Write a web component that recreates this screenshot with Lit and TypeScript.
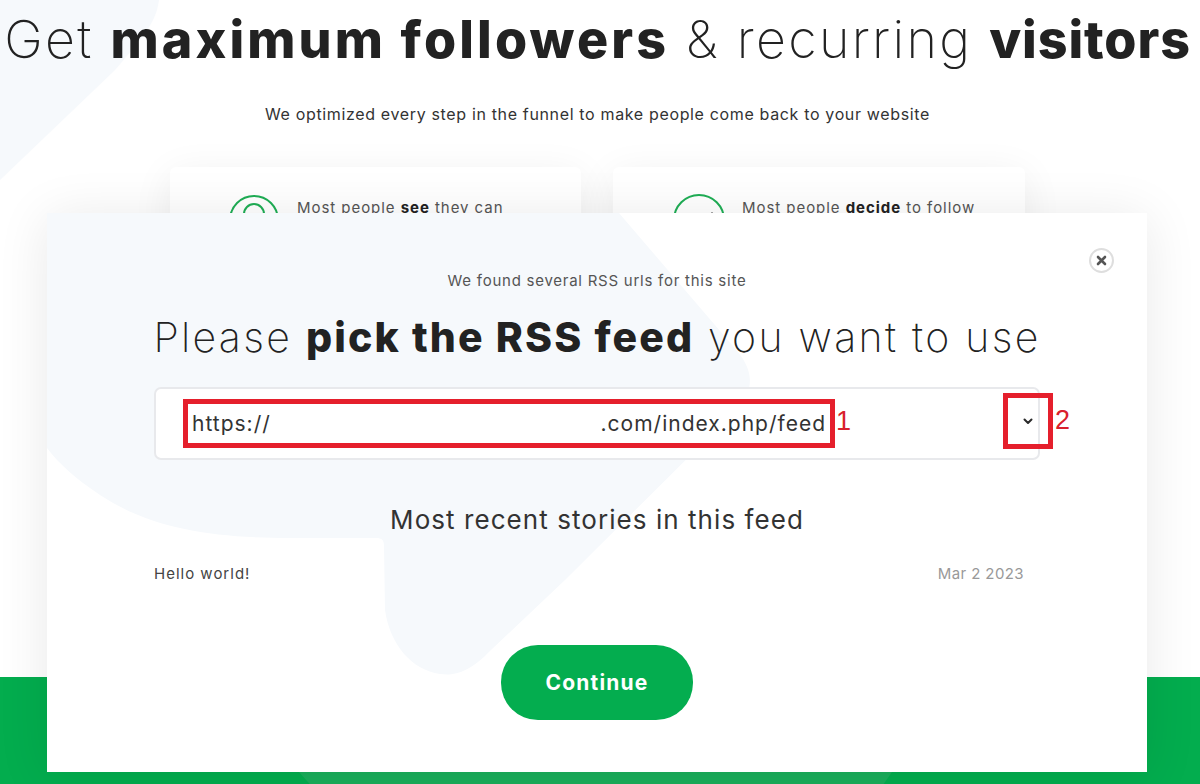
import { LitElement, html, css } from "lit";
import { customElement } from "lit/decorators.js";

@customElement("app-root")
export class AppRoot extends LitElement {
  static styles = css`
    :host { display: block; width: 1200px; height: 784px; font-family: Inter, "Noto Sans", sans-serif; color: #222; }
    * { box-sizing: border-box; }
    .page { position: relative; width: 1200px; height: 784px; overflow: hidden; background: #fff; display: flex; flex-direction: column; }
    .bg { position: absolute; left: 0; top: 0; pointer-events: none; }
    .main { position: relative; flex: 1; min-height: 0; padding-right: 5px; overflow: hidden; display: flex; flex-direction: column; align-items: center; }
    .main > h1, .main > .lead, .main > .cards { position: relative; }
    h1 { margin: 8px 0 0; font-size: 52px; line-height: 64px; font-weight: 200; white-space: nowrap; letter-spacing: 2.3px; color: #222; }
    h1 b, h2 b { font-weight: 800; color: #222; }
    h1 b.long { letter-spacing: 3.1px; }
    h1 b.short { letter-spacing: 0.9px; }
    .lead { margin: 31px 0 0; font-size: 16px; line-height: 22px; letter-spacing: 0.65px; color: #333; }
    .cards { display: grid; grid-template-columns: 411px 412px; gap: 32px; margin-top: 42px; }
    .card { height: 200px; background: #fff; border-radius: 6px; box-shadow: 0 8px 40px rgba(0,0,0,.07); padding: 27px 0 0 60px; display: flex; gap: 17px; }
    .card svg { flex: none; }
    .card p { margin: 4px 0 0; font-size: 15px; line-height: 20px; letter-spacing: 0.95px; color: #555; white-space: nowrap; }
    .card p b { color: #222; font-weight: 700; }
    .band { height: 107px; flex: none; background: #03ad4e; position: relative; }
    .strip { position: absolute; left: 299px; bottom: 0; width: 593px; height: 12px; background: #1aae5b; clip-path: polygon(0 0, 100% 0, 98.6% 100%, 1.8% 100%); }
    .modal { position: absolute; left: 47px; top: 213px; width: 1100px; height: 559px; background: #fff; box-shadow: 0 4px 50px rgba(0,0,0,.09); display: flex; flex-direction: column; align-items: center; padding: 57px 107px 0; overflow: visible; }
    .modal > * { position: relative; }
    .modal > svg.shape { position: absolute; left: 0; top: 0; }
    .close { position: absolute; left: 1042px; top: 35px; width: 25px; height: 25px; border-radius: 50%; border: 2px solid #dedede; background: #fff; display: flex; align-items: center; justify-content: center; }
    .found { margin: 0; font-size: 15px; line-height: 22px; letter-spacing: 0.75px; color: #555; }
    h2 { margin: 21px 0 0; font-size: 41px; line-height: 48px; font-weight: 200; white-space: nowrap; letter-spacing: 2.3px; color: #222; }
    h2 b { letter-spacing: 2.1px; }
    .select { margin-top: 26px; width: 886px; height: 73px; background: #fff; border: 2px solid #e8e9ec; border-radius: 7px; padding: 10px 0 0 27px; position: relative; flex: none; }
    .url { width: 652px; height: 49px; border: 5px solid #e51f2c; background: #fff; display: flex; justify-content: space-between; align-items: center; padding: 0 4px 0 4px; font-size: 21px; letter-spacing: 1px; color: #333; }
    .url .tail { white-space: nowrap; }
    .mark { position: absolute; font-family: "Liberation Sans", Arial, sans-serif; font-size: 27px; line-height: 30px; color: #d9202c; }
    .m1 { left: 680px; top: 17px; }
    .m2 { left: 899px; top: 16px; }
    .box2 { position: absolute; left: 847px; top: 4px; width: 50px; height: 56px; border: 5px solid #e51f2c; display: flex; align-items: center; justify-content: center; }
    h3 { margin: 43px 0 0; font-size: 26px; line-height: 34px; font-weight: 400; color: #333; white-space: nowrap; letter-spacing: 1.06px; }
    .row { margin-top: 26px; width: 870px; align-self: flex-start; display: flex; justify-content: space-between; font-size: 15px; line-height: 22px; color: #444; }
    .row .title { letter-spacing: 1px; }
    .row .date { color: #999; letter-spacing: 0.4px; }
    .continue { margin-top: 60px; width: 192px; height: 75px; flex: none; border: 0; border-radius: 37px; background: #04ad4f; color: #fff; font-family: inherit; font-size: 21px; font-weight: 700; letter-spacing: 1.2px; }
  `;

  render() {
    return html`
      <div class="page">
        <div class="main">
          <svg class="bg" width="200" height="190" viewBox="0 0 200 190" aria-hidden="true">
            <path d="M0 0H159C156 22 145 35 115 70L0 180Z" fill="#f6f9fc"/>
          </svg>
          <h1>Get <b class="long">maximum followers</b> &amp; recurring <b class="short">visitors</b></h1>
          <p class="lead">We optimized every step in the funnel to make people come back to your website</p>
          <div class="cards">
            <div class="card">
              <svg width="50" height="50" viewBox="0 0 50 50" fill="none" stroke="#1fae55" stroke-width="2">
                <circle cx="24" cy="26" r="24"/>
                <path d="M14 40V20a10 10 0 0 1 20 0V40"/>
              </svg>
              <p>Most people <b>see</b> they can</p>
            </div>
            <div class="card">
              <svg width="52" height="54" viewBox="0 0 52 54" fill="none" stroke="#1fae55" stroke-width="2">
                <circle cx="26" cy="26" r="25"/>
                <circle cx="39" cy="19" r="1" fill="#888" stroke="none"/>
              </svg>
              <p>Most people <b>decide</b> to follow</p>
            </div>
          </div>
        </div>
        <div class="band"><div class="strip"></div></div>

        <div class="modal">
          <svg class="shape" width="720" height="470" viewBox="47 213 720 470" aria-hidden="true">
            <path fill="#f6f9fc" d="M47 213H619L738 352C752 370 754 385 742 404L565 580L491 650C470 672 455 676 440 674C412 670 390 645 385 610L384 546C384 540 382 538 376 538H290C210 538 150 528 100 495C75 478 60 465 47 448Z"/>
          </svg>
          <div class="close">
            <svg width="11" height="11" viewBox="0 0 11 11" stroke="#555" stroke-width="2.6" stroke-linecap="round"><path d="M2 2L9 9M9 2L2 9"/></svg>
          </div>
          <p class="found">We found several RSS urls for this site</p>
          <h2>Please <b>pick the RSS feed</b> you want to use</h2>
          <div class="select">
            <div class="url"><span>https://</span><span class="tail">.com/index.php/feed</span></div>
            <span class="mark m1">1</span>
            <div class="box2">
              <svg width="10" height="7" viewBox="0 0 10 7" fill="none" stroke="#2b2b2b" stroke-width="2" stroke-linecap="round" stroke-linejoin="round"><path d="M1.5 1.5L5 5L8.5 1.5"/></svg>
            </div>
            <span class="mark m2">2</span>
          </div>
          <h3>Most recent stories in this feed</h3>
          <div class="row"><span class="title">Hello world!</span><span class="date">Mar 2 2023</span></div>
          <button class="continue">Continue</button>
        </div>
      </div>
    `;
  }
}
